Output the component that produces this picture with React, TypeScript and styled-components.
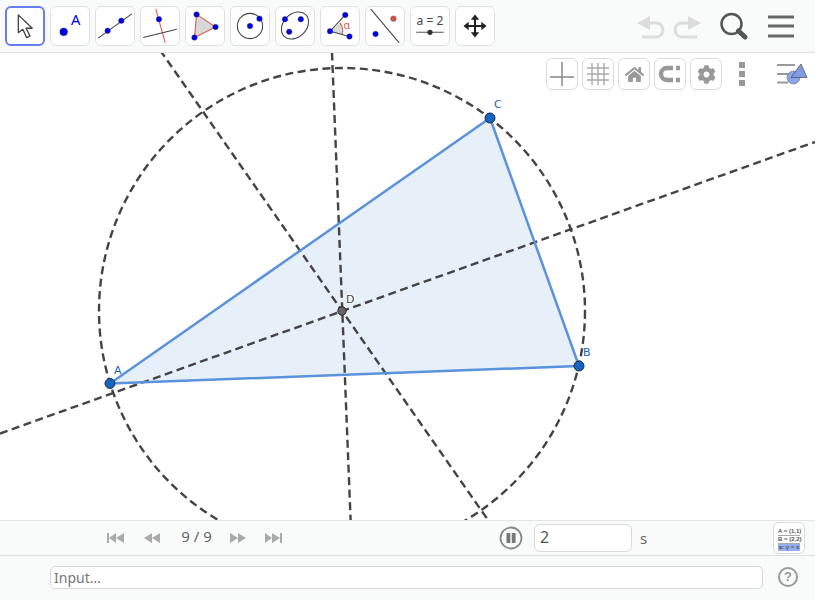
import styled, { createGlobalStyle } from "styled-components";
import { FaCog, FaHome } from "react-icons/fa";

const GlobalStyle = createGlobalStyle`
  html, body {
    margin: 0;
    padding: 0;
    background: #ffffff;
    font-family: "DejaVu Sans", sans-serif;
  }
`;

const Page = styled.div`
  width: 815px;
  height: 600px;
  display: flex;
  flex-direction: column;
  overflow: hidden;
`;

const Toolbar = styled.div`
  height: 52px;
  flex: none;
  box-sizing: content-box;
  display: flex;
  align-items: flex-start;
  gap: 5px;
  padding-left: 5px;
  background: #f9fafa;
  border-bottom: 1px solid #e2e2e2;
`;

const ToolButton = styled.div<{ $active?: boolean }>`
  width: 40px;
  height: 40px;
  margin-top: 6px;
  box-sizing: border-box;
  background: #ffffff;
  border-radius: 6px;
  border: ${(p) => (p.$active ? "2px solid #6a7cf2" : "1px solid #e0e0e0")};
  display: flex;
  align-items: center;
  justify-content: center;
`;

const ToolIcon = styled.svg`
  width: 40px;
  height: 40px;
  flex: none;
`;

const TopActions = styled.div`
  margin-left: auto;
  display: flex;
  align-items: center;
  height: 50px;
`;

const TopIcon = styled.svg<{ $w: number }>`
  width: ${(p) => p.$w}px;
  height: 50px;
  display: block;
`;

const Canvas = styled.div`
  height: 467px;
  flex: none;
  position: relative;
  background: #ffffff;
  overflow: hidden;
`;

const Drawing = styled.svg`
  display: block;
  width: 815px;
  height: 467px;
`;

const Label = styled.text<{ $dark?: boolean }>`
  font-family: "DejaVu Sans", sans-serif;
  font-size: 11px;
  fill: ${(p) => (p.$dark ? "#444444" : "#1565c0")};
  paint-order: stroke;
  stroke: #ffffff;
  stroke-width: ${(p) => (p.$dark ? 2 : 0)}px;
`;

const StyleBar = styled.div`
  position: absolute;
  top: 5px;
  left: 546px;
  display: flex;
  align-items: center;
  gap: 4px;
`;

const StyleButton = styled.div`
  width: 32px;
  height: 32px;
  box-sizing: border-box;
  background: #ffffff;
  border: 1px solid #dcdcdc;
  border-radius: 6px;
  color: #999999;
  display: flex;
  align-items: center;
  justify-content: center;
  font-size: 19px;
`;

const Kebab = styled.div`
  width: 6px;
  margin-left: 13px;
  display: flex;
  flex-direction: column;
  gap: 3px;
`;

const KebabDot = styled.span`
  display: block;
  height: 6px;
  background: #999999;
`;

const StyleToggle = styled.svg`
  width: 36px;
  height: 32px;
  margin-left: 25px;
  flex: none;
`;

const PlayerBar = styled.div`
  height: 34px;
  flex: none;
  display: flex;
  align-items: center;
  background: #f9fafa;
  border-top: 1px solid #e4e4e4;
  border-bottom: 1px solid #dedede;
  padding-left: 107px;
`;

const SkipIcon = styled.svg`
  width: 17px;
  height: 10px;
  fill: #aaaaaa;
  flex: none;
`;

const StepLabel = styled.span`
  width: 65px;
  margin-left: 3px;
  text-align: center;
  font-family: "Noto Sans", sans-serif;
  font-size: 15px;
  color: #666666;
  position: relative;
  top: -2px;
`;

const PlayerGap = styled.div<{ $w: number }>`
  width: ${(p) => p.$w}px;
  flex: none;
`;

const PauseIcon = styled.svg`
  width: 24px;
  height: 24px;
  flex: none;
`;

const SpeedBox = styled.div`
  width: 98px;
  height: 28px;
  margin-left: 11px;
  box-sizing: border-box;
  padding-left: 5px;
  background: #ffffff;
  border: 1px solid #d8d8d8;
  border-radius: 6px;
  font-family: "Noto Sans", sans-serif;
  font-size: 16px;
  line-height: 25px;
  color: #555555;
`;

const Unit = styled.span`
  margin-left: 8px;
  font-family: "Noto Sans", sans-serif;
  font-size: 15px;
  color: #666666;
`;

const AlgebraButton = styled.div`
  margin-left: auto;
  margin-right: 10px;
  width: 32px;
  height: 32px;
  box-sizing: border-box;
  padding-top: 5px;
  background: #ffffff;
  border: 1px solid #dcdcdc;
  border-radius: 6px;
  display: flex;
  flex-direction: column;
  align-items: center;
  font-family: "Liberation Sans", sans-serif;
  font-size: 6px;
  line-height: 7px;
  font-weight: bold;
  color: #555555;
`;

const AlgebraRow = styled.span<{ $marked?: boolean }>`
  width: 22px;
  text-align: center;
  white-space: nowrap;
  background: ${(p) => (p.$marked ? "#93aef0" : "transparent")};
  border-bottom: ${(p) => (p.$marked ? "none" : "1px solid #aaaaaa")};
`;

const InputBar = styled.div`
  flex: 1;
  display: flex;
  align-items: flex-start;
  padding-left: 50px;
  padding-top: 10px;
  background: #f9fafa;
`;

const InputField = styled.div`
  width: 713px;
  height: 23px;
  box-sizing: border-box;
  padding-left: 3px;
  background: #ffffff;
  border: 1px solid #d8d8d8;
  border-radius: 5px;
  font-family: "Noto Sans", sans-serif;
  font-size: 14px;
  line-height: 21px;
  color: #757575;
`;

const HelpIcon = styled.div`
  width: 20px;
  height: 20px;
  margin-left: 15px;
  margin-top: 1px;
  box-sizing: border-box;
  border: 2px solid #999999;
  border-radius: 50%;
  font-family: "Liberation Sans", sans-serif;
  font-weight: bold;
  font-size: 13px;
  line-height: 16px;
  text-align: center;
  color: #999999;
`;

const BLUE = "#0000e6";
const RED = "#e2574c";
const INK = "#444444";

const Dot = ({ x, y, r = 2.6, c = BLUE }: { x: number; y: number; r?: number; c?: string }) => (
  <circle cx={x} cy={y} r={r} fill={c} stroke="#333366" strokeWidth={0.4} />
);

const MoveIcon = () => (
  <path d="M14 10 L14 26 L18 23 L21.5 30.5 L24.5 29 L21 22 L26.5 22 Z" fill="#fff" stroke="#444" strokeWidth={1.2} strokeLinejoin="round" />
);

const tools = [
  <MoveIcon />,
  <>
    <Dot x={14} y={25.5} r={3.7} />
    <text x={25.5} y={19} fontSize={14} textAnchor="middle" fill={BLUE} fontFamily="Noto Sans">A</text>
  </>,
  <>
    <line x1={4} y1={31.5} x2={36} y2={8.5} stroke={INK} strokeWidth={1} />
    <Dot x={13} y={24.5} />
    <Dot x={26} y={15} />
  </>,
  <>
    <line x1={16} y1={4} x2={25} y2={36} stroke={RED} strokeWidth={1} />
    <line x1={4} y1={31} x2={36} y2={23} stroke={INK} strokeWidth={1} />
    <Dot x={19} y={13.5} />
  </>,
  <>
    <polygon points="12,9 30,21 10,31" fill="#d8d8d8" stroke={RED} strokeWidth={1} />
    <Dot x={12} y={9} />
    <Dot x={30} y={21} />
    <Dot x={10} y={31} />
  </>,
  <>
    <circle cx={20} cy={20} r={12} fill="none" stroke={INK} strokeWidth={1} />
    <Dot x={20} y={20} />
    <Dot x={29} y={13} />
  </>,
  <>
    <ellipse cx={20} cy={19.5} rx={14.5} ry={11} transform="rotate(-45 20 19.5)" fill="none" stroke={INK} strokeWidth={1} />
    <Dot x={10.5} y={13.5} />
    <Dot x={25.5} y={13.5} />
    <Dot x={14.5} y={25.5} />
  </>,
  <>
    <path d="M10.5 25 L20 17 A12 12 0 0 1 22 28 Z" fill="#d8d8d8" />
    <path d="M20 17 A12 12 0 0 1 22 28" fill="none" stroke={RED} strokeWidth={1} />
    <line x1={10.5} y1={25} x2={25} y2={9.5} stroke={INK} strokeWidth={1} />
    <line x1={10.5} y1={25} x2={29} y2={30} stroke={INK} strokeWidth={1} />
    <text x={26.5} y={23} fontSize={10} textAnchor="middle" fill={RED} fontFamily="Noto Sans">α</text>
    <Dot x={10.5} y={25} />
    <Dot x={25} y={9.5} />
    <Dot x={29} y={30} />
  </>,
  <>
    <line x1={6.5} y1={4} x2={33.5} y2={36} stroke={INK} strokeWidth={1} />
    <Dot x={11} y={27.5} />
    <Dot x={28} y={13} c="#e0503c" />
  </>,
  <>
    <text x={20} y={19} fontSize={11.5} textAnchor="middle" fill={INK} fontFamily="Noto Sans">a = 2</text>
    <line x1={7} y1={26} x2={33} y2={26} stroke="#777" strokeWidth={1.2} />
    <circle cx={20} cy={26} r={2.5} fill="#333" />
  </>,
  <>
    <path d="M20 9 L24 14 H21 V19 H26 V16 L31 20 L26 24 V21 H21 V26 H24 L20 31 L16 26 H19 V21 H14 V24 L9 20 L14 16 V19 H19 V14 H16 Z" fill="#222" />
  </>,
];

const App = () => {
  return (
    <>
      <GlobalStyle />
      <Page>
        <Toolbar>
          {tools.map((icon, i) => (
            <ToolButton key={i} $active={i === 0}>
              <ToolIcon viewBox={i === 0 ? "2 2 36 36" : "1 1 38 38"}>{icon}</ToolIcon>
            </ToolButton>
          ))}
          <TopActions>
            <TopIcon $w={37} viewBox="0 0 37 50">
              <path d="M5 23 H20 a7 7 0 0 1 0 14 H6" fill="none" stroke="#dcdcdc" strokeWidth={3} />
              <polygon points="1,23 14,16 14,30" fill="#dcdcdc" />
            </TopIcon>
            <TopIcon $w={32} viewBox="0 0 32 50">
              <path d="M25 23 H9 a7 7 0 0 0 0 14 H24" fill="none" stroke="#dcdcdc" strokeWidth={3} />
              <polygon points="28,23 15,16 15,30" fill="#dcdcdc" />
            </TopIcon>
            <TopIcon $w={54} viewBox="0 0 54 50">
              <circle cx={26.5} cy={24} r={10} fill="none" stroke="#555" strokeWidth={2.5} />
              <line x1={33.5} y1={31} x2={40} y2={37} stroke="#555" strokeWidth={5} strokeLinecap="round" />
            </TopIcon>
            <TopIcon $w={56} viewBox="0 0 56 50">
              <path d="M9 17 H35 M9 26 H35 M9 36 H35" stroke="#666" strokeWidth={3.2} />
            </TopIcon>
          </TopActions>
        </Toolbar>
        <Canvas>
          <Drawing viewBox="0 53 815 467">
            <polygon points="110,383.5 579,366 490,118" fill="#e7eff9" />
            <g fill="none" stroke="#444444" strokeWidth={2.4} strokeDasharray="8 4.5">
              <circle cx={342} cy={311} r={243} />
              <line x1={0} y1={433.5} x2={815} y2={142} />
              <line x1={331.5} y1={40} x2={351} y2={530} />
              <line x1={153} y1={40} x2={495} y2={530} />
            </g>
            <polygon points="110,383.5 579,366 490,118" fill="none" stroke="#5a92dc" strokeWidth={2.5} strokeLinejoin="round" />
            <circle cx={110} cy={383.5} r={5} fill="#1565c0" stroke="#1a2a4a" strokeWidth={1} />
            <circle cx={579} cy={366} r={5} fill="#1565c0" stroke="#1a2a4a" strokeWidth={1} />
            <circle cx={490} cy={118} r={5} fill="#1565c0" stroke="#1a2a4a" strokeWidth={1} />
            <circle cx={342} cy={311} r={4.2} fill="#666666" stroke="#222222" strokeWidth={1} />
            <Label x={114} y={374}>A</Label>
            <Label x={583} y={356}>B</Label>
            <Label x={494} y={108}>C</Label>
            <Label x={346} y={303} $dark>D</Label>
          </Drawing>
          <StyleBar>
            <StyleButton>
              <svg width={28} height={28} viewBox="0 0 28 28">
                <path d="M14 2 V26 M2 17 H26" stroke="#888" strokeWidth={1.5} fill="none" />
              </svg>
            </StyleButton>
            <StyleButton>
              <svg width={28} height={28} viewBox="0 0 28 28">
                <path d="M3 8 H25 M3 14 H25 M3 20 H25 M8 3 V25 M14 3 V25 M20 3 V25" stroke="#aaa" strokeWidth={1.4} fill="none" />
              </svg>
            </StyleButton>
            <StyleButton>
              <FaHome />
            </StyleButton>
            <StyleButton>
              <svg width={28} height={28} viewBox="0 0 28 28">
                <path d="M17 8 H11 a6 6 0 0 0 0 12 H17" stroke="#999" strokeWidth={4.5} fill="none" />
                <path d="M20 8 H24 M20 20 H24" stroke="#999" strokeWidth={4.5} fill="none" />
              </svg>
            </StyleButton>
            <StyleButton>
              <FaCog />
            </StyleButton>
            <Kebab>
              <KebabDot />
              <KebabDot />
              <KebabDot />
            </Kebab>
            <StyleToggle viewBox="0 0 36 32">
              <path d="M3 7 H21 M3 16 H17 M3 24.5 H14" stroke="#999" strokeWidth={2} fill="none" />
              <circle cx={19.5} cy={19.5} r={6.5} fill="#8aa6ea" stroke="#666" strokeWidth={0.6} />
              <polygon points="27,6 33,19.5 17,19.5" fill="#7f9ae6" stroke="#555" strokeWidth={0.8} />
            </StyleToggle>
          </StyleBar>
        </Canvas>
        <PlayerBar>
          <SkipIcon viewBox="0 0 17 10">
            <path d="M0 0 H2 V10 H0 Z M2 5 L9 0 V10 Z M9 5 L17 0 V10 Z" />
          </SkipIcon>
          <PlayerGap $w={20} />
          <SkipIcon viewBox="0 0 17 10">
            <path d="M0 5 L8 0 V10 Z M8 5 L16 0 V10 Z" />
          </SkipIcon>
          <StepLabel>9 / 9</StepLabel>
          <SkipIcon viewBox="0 0 17 10">
            <path d="M1 0 L9 5 L1 10 Z M9 0 L17 5 L9 10 Z" />
          </SkipIcon>
          <PlayerGap $w={19} />
          <SkipIcon viewBox="0 0 17 10">
            <path d="M0 0 L7 5 L0 10 Z M7 0 L15 5 L7 10 Z M15 0 H17 V10 H15 Z" />
          </SkipIcon>
          <PlayerGap $w={217} />
          <PauseIcon viewBox="0 0 24 24">
            <circle cx={12} cy={12} r={10.5} fill="none" stroke="#888" strokeWidth={1.8} />
            <rect x={7.5} y={7} width={3.8} height={10} rx={0.6} fill="#777" />
            <rect x={12.8} y={7} width={3.8} height={10} rx={0.6} fill="#777" />
          </PauseIcon>
          <SpeedBox>2</SpeedBox>
          <Unit>s</Unit>
          <AlgebraButton>
            <AlgebraRow>A = (1,1)</AlgebraRow>
            <AlgebraRow>B = (2,2)</AlgebraRow>
            <AlgebraRow $marked>a: y = x</AlgebraRow>
          </AlgebraButton>
        </PlayerBar>
        <InputBar>
          <InputField>Input…</InputField>
          <HelpIcon>?</HelpIcon>
        </InputBar>
      </Page>
    </>
  );
};

export default App;
